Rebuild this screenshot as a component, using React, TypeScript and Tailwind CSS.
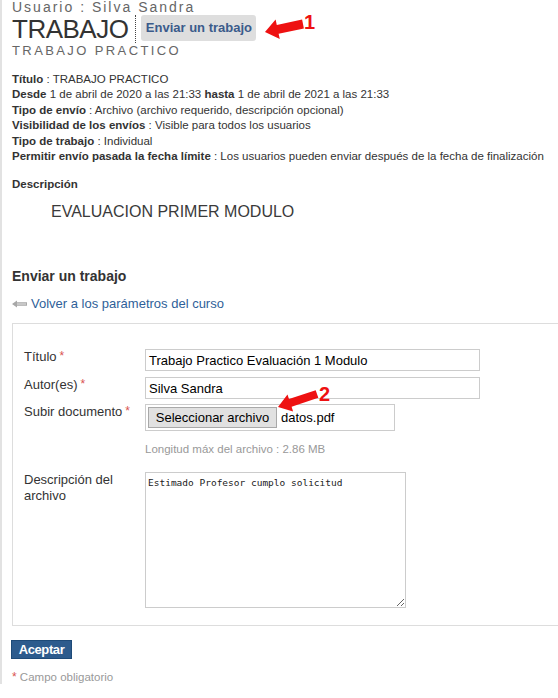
import React from "react";

function Req() {
  return <span className="text-[#d9534f] text-[12px] align-top ml-[3px]">*</span>;
}

export default function App() {
  return (
    <div className="relative w-[558px] h-[698px] overflow-hidden bg-white font-['Liberation_Sans',Arial,sans-serif] text-[#333]">
      <div className="border-l-2 border-[#e2e2e2] pl-[10px]">
        <div className="text-[14px] leading-[15px] tracking-[2px] text-[#666]">Usuario : Silva Sandra</div>
        <div className="flex items-start h-[28px]">
          <div className="text-[26px] leading-[28px] tracking-[-0.5px] text-[#333]">TRABAJO</div>
          <div className="ml-[7px] h-[28px] border-l border-dotted border-[#444]" />
          <div className="ml-[5px] h-[26px] w-[115px] rounded-[3px] bg-[#dedede] flex items-center justify-center text-[13px] font-bold text-[#3b5b8b]">
            Enviar un trabajo
          </div>
        </div>
        <div className="text-[13px] leading-[15px] tracking-[2.4px] text-[#666]">TRABAJO PRACTICO</div>

        <div className="mt-[14px] text-[11.5px] leading-[15.4px] text-[#333]">
          <div><b>Título</b> : TRABAJO PRACTICO</div>
          <div><b>Desde</b> 1 de abril de 2020 a las 21:33 <b>hasta</b> 1 de abril de 2021 a las 21:33</div>
          <div><b>Tipo de envío</b> : Archivo (archivo requerido, descripción opcional)</div>
          <div><b>Visibilidad de los envíos</b> : Visible para todos los usuarios</div>
          <div><b>Tipo de trabajo</b> : Individual</div>
          <div><b>Permitir envío pasada la fecha límite</b> : Los usuarios pueden enviar después de la fecha de finalización</div>
        </div>

        <div className="mt-[13px] text-[11.5px] leading-[15px] font-bold text-[#333]">Descripción</div>
        <div className="mt-[11px] ml-[39px] text-[16px] leading-[18px] text-[#3a3a3a]">EVALUACION PRIMER MODULO</div>

        <div className="mt-[47px] text-[14px] leading-[16px] font-bold text-[#333]">Enviar un trabajo</div>
        <div className="mt-[12px] flex items-center text-[13px] leading-[15px]">
          <svg width="15" height="8" viewBox="0 0 15 8" className="mr-[4px]">
            <path d="M0 4 L5 0.5 L5 2.3 L15 2.3 L15 5.7 L5 5.7 L5 7.5 Z" fill="#a8a8a8" />
            <line x1="5" y1="4" x2="14" y2="4" stroke="#e6e6e6" strokeWidth="1" />
          </svg>
          <span className="text-[#2f5f99]">Volver a los parámetros del curso</span>
        </div>

        <div className="mt-[12px] w-[560px] border border-[#dddddd] pt-[25px] pl-[11px] pb-[17px]">
          <div className="flex">
            <div className="w-[121px] text-[13px] leading-[15px] text-[#333]">Título<Req /></div>
            <div className="w-[335px] h-[22px] border border-[#cccccc] px-[3px] flex items-center text-[13px] text-black">
              Trabajo Practico Evaluación 1 Modulo
            </div>
          </div>
          <div className="flex mt-[6px]">
            <div className="w-[121px] text-[13px] leading-[15px] text-[#333]">Autor(es)<Req /></div>
            <div className="w-[335px] h-[22px] border border-[#cccccc] px-[3px] flex items-center text-[13px] text-black">
              Silva Sandra
            </div>
          </div>
          <div className="flex mt-[5px]">
            <div className="w-[121px] text-[13px] leading-[15px] text-[#333]">Subir documento<Req /></div>
            <div>
              <div className="w-[250px] h-[27px] border border-[#cccccc] pl-[2px] flex items-center text-[13px] text-black">
                <div className="h-[21px] w-[129px] border border-[#a9a9a9] bg-[#e1e1e1] flex items-center justify-center">
                  Seleccionar archivo
                </div>
                <span className="ml-[4px]">datos.pdf</span>
              </div>
              <div className="mt-[11px] text-[11.5px] leading-[14px] text-[#999]">Longitud máx del archivo : 2.86 MB</div>
            </div>
          </div>
          <div className="flex mt-[16px]">
            <div className="w-[121px] text-[13px] leading-[16px] text-[#333]">Descripción del archivo</div>
            <textarea
              readOnly
              defaultValue="Estimado Profesor cumplo solicitud"
              className="w-[261px] h-[136px] border border-[#cccccc] px-[2px] py-[4px] font-['DejaVu_Sans_Mono',monospace] text-[9.5px] leading-[12px] text-[#222] outline-none"
            />
          </div>
        </div>

        <div className="mt-[14px] -ml-[1px] w-[61px] h-[19px] bg-[#2d5b8d] border border-[#1e4a78] flex items-center justify-center text-[13px] leading-none font-bold tracking-[-0.4px] text-white">
          Aceptar
        </div>
        <div className="mt-[11px] text-[11.5px] leading-[14px] text-[#999]">
          <span className="text-[#d9534f] text-[12px]">*</span> Campo obligatorio
        </div>
      </div>

      <svg className="absolute left-0 top-0 pointer-events-none" width="558" height="698" viewBox="0 0 558 698">
        <polygon
          points="265,32 275.6,19.5 276.8,24.9 302.1,19.6 303.9,28.4 278.6,33.7 279.8,39.1"
          fill="#ee1111"
        />
        <polygon
          points="278,407 287.5,394.4 289,399.1 315.7,390.2 318.3,397.8 291.6,406.7 293.1,411.4"
          fill="#ee1111"
        />
      </svg>
      <span className="absolute left-[304px] top-[12px] text-[20px] leading-[20px] font-bold text-[#ee1111]">1</span>
      <span className="absolute left-[319px] top-[384px] text-[20px] leading-[20px] font-bold text-[#ee1111]">2</span>
    </div>
  );
}
